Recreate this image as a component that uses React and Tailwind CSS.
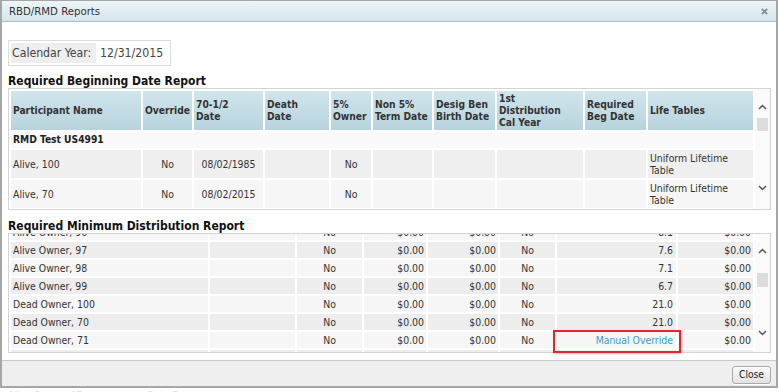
import React from "react";

const Chevron = ({ down }) => (
  <svg width="9" height="6" viewBox="0 0 9 6" className="block">
    <polyline
      points={down ? "1,1 4.5,4.5 8,1" : "1,5 4.5,1.5 8,5"}
      fill="none"
      stroke="#555"
      strokeWidth="1.5"
    />
  </svg>
);

const ScrollBar = ({ pt, gap, thumb, pb }) => (
  <div className="w-[15px] flex flex-col items-center bg-[#fafafa]">
    <div style={{ height: pt }} />
    <div className="h-[8px] flex items-center justify-center">
      <Chevron />
    </div>
    <div style={{ height: gap }} />
    <div className="w-[11px] bg-[#dcdcdc]" style={{ height: thumb }} />
    <div className="flex-1" />
    <div className="h-[8px] flex items-center justify-center">
      <Chevron down />
    </div>
    <div style={{ height: pb }} />
  </div>
);

const head1 = [
  { w: 130, t: ["Participant Name"] },
  { w: 49, t: ["Override"] },
  { w: 69, t: ["70-1/2", "Date"] },
  { w: 64, t: ["Death", "Date"] },
  { w: 40, t: ["5%", "Owner"] },
  { w: 59, t: ["Non 5%", "Term Date"] },
  { w: 61, t: ["Desig Ben", "Birth Date"] },
  { w: 86, t: ["1st", "Distribution", "Cal Year"] },
  { w: 61, t: ["Required", "Beg Date"] },
  { w: 105, t: ["Life Tables"] },
];

const rows1 = [
  { bg: "bg-[#efefef]", c: ["Alive, 100", "No", "08/02/1985", "", "No", "", "", "", "", "Uniform Lifetime Table"] },
  { bg: "bg-[#f6f6f6]", c: ["Alive, 70", "No", "08/02/2015", "", "No", "", "", "", "", "Uniform Lifetime Table"] },
];
const align1 = ["text-left", "text-center", "text-center", "text-center", "text-center", "text-center", "text-center", "text-center", "text-center", "text-left"];

const widths2 = [197, 85, 65, 62, 70, 55, 119, 75];
const align2 = ["text-left", "text-left", "text-center", "text-right", "text-right", "text-center", "text-right", "text-right"];
const rows2 = [
  ["Alive Owner, 96", "", "No", "$0.00", "$0.00", "No", "8.1", "$0.00"],
  ["Alive Owner, 97", "", "No", "$0.00", "$0.00", "No", "7.6", "$0.00"],
  ["Alive Owner, 98", "", "No", "$0.00", "$0.00", "No", "7.1", "$0.00"],
  ["Alive Owner, 99", "", "No", "$0.00", "$0.00", "No", "6.7", "$0.00"],
  ["Dead Owner, 100", "", "No", "$0.00", "$0.00", "No", "21.0", "$0.00"],
  ["Dead Owner, 70", "", "No", "$0.00", "$0.00", "No", "21.0", "$0.00"],
  ["Dead Owner, 71", "", "No", "$0.00", "$0.00", "No", "MO", "$0.00"],
  ["Dead Owner, 72", "", "No", "$0.00", "$0.00", "No", "21.0", "$0.00"],
];

export default function App() {
  return (
    <div className="relative w-[779px] h-[392px] overflow-hidden bg-white font-['DejaVu_Sans',sans-serif] [font-stretch:condensed] text-[#333]">
      <div className="flex flex-col w-[778px] h-[388px] border-x-2 border-t border-b-2 border-[#a6a6a6]">
        {/* title bar */}
        <div className="h-[21px] shrink-0 flex items-center justify-between pl-[7px] pr-[8px] border-b border-[#a9bdc6] bg-gradient-to-b from-[#edf5f8] to-[#d3e5ec]">
          <span className="text-[11.3px] text-[#333] leading-[13px]">RBD/RMD Reports</span>
          <svg width="7" height="7" viewBox="0 0 7 7">
            <path d="M0.8 0.8 L6.2 6.2 M6.2 0.8 L0.8 6.2" stroke="#8a8a8a" strokeWidth="1.8" />
          </svg>
        </div>

        {/* body */}
        <div className="flex-1 pl-[6px] pr-[5px] pt-[18px] flex flex-col">
          <table className="border-separate border-spacing-[2px] border border-[#dcdcdc] self-start">
            <tbody>
              <tr>
                <td className="h-[20px] w-[85px] bg-[#eeeeee] pl-[1px] pr-[1px] text-[12.2px] text-[#444] leading-[14px] whitespace-nowrap">Calendar Year:</td>
                <td className="h-[20px] w-[70px] pl-[2px] text-[12.2px] text-[#444] leading-[14px] whitespace-nowrap">12/31/2015</td>
              </tr>
            </tbody>
          </table>

          <div className="mt-[9px] h-[13px] leading-[13px] text-[12px] font-bold text-[#111]">Required Beginning Date Report</div>

          {/* table 1 */}
          <div className="h-[122px] shrink-0 border border-[#d3d3d3] flex overflow-hidden">
            <div className="w-[746px] overflow-hidden">
              <table className="table-fixed w-[746px] border-separate border-spacing-[2px] text-[10.4px] leading-[12px]">
                <colgroup>
                  {head1.map((h, i) => (
                    <col key={i} style={{ width: h.w }} />
                  ))}
                </colgroup>
                <thead>
                  <tr>
                    {head1.map((h, i) => (
                      <th
                        key={i}
                        className="h-[39px] p-0 pl-[2px] text-left align-middle font-bold text-[10.2px] text-[#333] bg-gradient-to-b from-[#d0e5ec] to-[#b8d3dd] whitespace-nowrap"
                      >
                        {h.t.map((l, j) => (
                          <div key={j}>{l}</div>
                        ))}
                      </th>
                    ))}
                  </tr>
                </thead>
                <tbody>
                  <tr>
                    <td colSpan={10} className="h-[16px] p-0 pl-[2px] bg-[#f9f9f9] font-bold text-[10.2px] text-[#222]">
                      RMD Test US4991
                    </td>
                  </tr>
                  {rows1.map((r, i) => (
                    <tr key={i}>
                      {r.c.map((c, j) => (
                        <td key={j} className={`h-[28px] p-0 px-[2px] align-middle ${r.bg} ${align1[j]} text-[#333]`}>
                          {c}
                        </td>
                      ))}
                    </tr>
                  ))}
                </tbody>
              </table>
            </div>
            <ScrollBar pt={14} gap={7} thumb={13} pb={17} />
          </div>

          <div className="mt-[10px] h-[13px] leading-[13px] text-[12px] font-bold text-[#111]">Required Minimum Distribution Report</div>

          {/* table 2 */}
          <div className="h-[120px] shrink-0 border border-[#d3d3d3] flex overflow-hidden">
            <div className="w-[746px] overflow-hidden">
              <table className="mt-[-12px] table-fixed w-[746px] border-separate border-spacing-[2px] text-[10.4px] leading-[12px]">
                <colgroup>
                  {widths2.map((w, i) => (
                    <col key={i} style={{ width: w }} />
                  ))}
                </colgroup>
                <tbody>
                  {rows2.map((r, i) => (
                    <tr key={i}>
                      {r.map((c, j) => (
                        <td
                          key={j}
                          className={`h-[16px] p-0 px-[2px] align-middle whitespace-nowrap ${i % 2 === 0 ? "bg-[#f6f6f6]" : "bg-[#ededed]"} ${align2[j]} ${j === 6 ? "pr-[3px]" : ""} text-[#333]`}
                        >
                          {c === "MO" ? <span className="text-[#3d9ad6]">Manual Override</span> : c}
                        </td>
                      ))}
                    </tr>
                  ))}
                </tbody>
              </table>
            </div>
            <ScrollBar pt={13} gap={18} thumb={14} pb={15} />
          </div>
        </div>

        {/* footer */}
        <div className="h-[26px] shrink-0 border-t border-[#c9c9c9] bg-[#efefef] flex items-start justify-end pt-[5px] pr-[5px]">
          <button className="h-[18px] w-[39px] rounded-[3px] border border-[#a9a9a9] bg-gradient-to-b from-[#fbfbfb] to-[#e2e2e2] text-[10.2px] leading-[14px] text-[#222] shadow-[0_1px_0_#fff]">
            Close
          </button>
        </div>
      </div>

      {/* page behind the dialog */}
      <div className="h-[4px] overflow-hidden flex text-[10.4px] leading-[12px] text-[#e2e2e2]">
        <span className="pl-[8px] w-[147px] pt-[1px]">Alive Owner, 97</span>
        <span className="pt-[1px] text-[#dbe3e7]">Date Date</span>
      </div>

      {/* annotation box */}
      <div className="absolute left-[553px] top-[330px] w-[128px] h-[23px] border-2 border-[#e3262b] shadow-[1px_1px_2px_rgba(0,0,0,0.25)]" />
    </div>
  );
}
